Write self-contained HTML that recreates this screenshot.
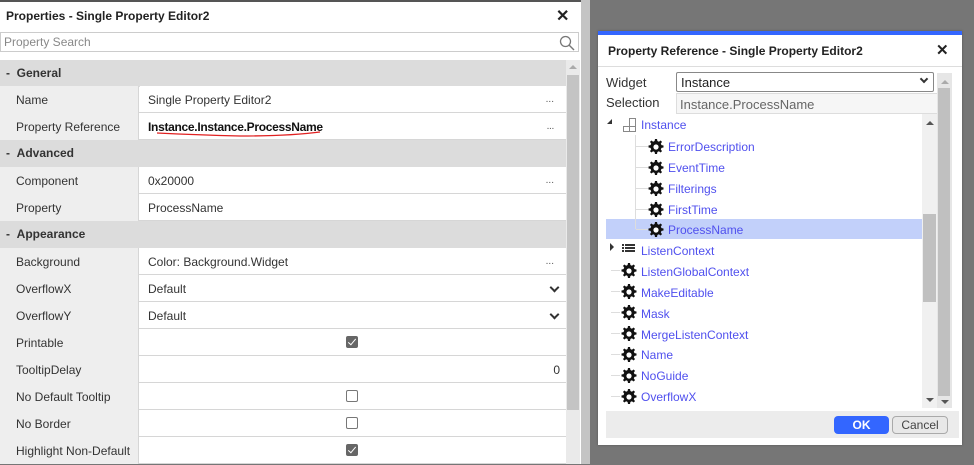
<!DOCTYPE html>
<html><head><style>
*{box-sizing:border-box;margin:0;padding:0}
body{width:974px;height:464px;overflow:hidden;background:#767676;font-family:"Liberation Sans",sans-serif;font-size:12px;color:#333;position:relative}
.a{position:absolute}
.lp{left:0;top:0;width:581px;height:464px;background:#fff;border-top:2px solid #555}
.strip{left:581px;top:0;width:9px;height:464px;background:#c4c4c4}
.row{position:absolute;left:0;width:566px;height:27px;border-bottom:1px solid #d6d6d6}
.lab{position:absolute;left:0;top:0;width:139px;height:27px;background:#eeeeee;padding-left:16px;line-height:28px;border-right:1px solid #d6d6d6}
.val{position:absolute;left:140px;top:0;right:0;height:26px;line-height:28px;padding-left:8px;background:#fff}
.hd{position:absolute;left:0;width:566px;height:27px;background:#dcdcdc;line-height:26px;font-weight:bold;padding-left:6px}
.dots{position:absolute;right:12px;top:0;font-size:10px;color:#555}
.chev{position:absolute;right:8px;top:9px;width:7px;height:7px;border-right:2px solid #333;border-bottom:2px solid #333;transform:rotate(45deg)}
.cb{position:absolute;left:206px;top:7px;width:12px;height:12px;border:1px solid #777;border-radius:2px;background:#fff}
.cb.on{background:#666;border-color:#666}
.cb.on:after{content:"";position:absolute;left:3px;top:0px;width:3px;height:7px;border-right:1.5px solid #fff;border-bottom:1.5px solid #fff;transform:rotate(40deg)}
.tr{position:absolute;font-size:12px;color:#5050ee;height:21px;line-height:23px}
.tl{position:absolute;height:1px;background:#ddd}
</style></head><body>
<div class="a lp"></div>
<div class="a strip"></div>
<div class="a" style="left:6px;top:9px;font-weight:bold;font-size:12px;color:#222">Properties - Single Property Editor2</div>
<div class="a" style="left:556px;top:6px;font-size:16px;font-weight:bold;color:#222">✕</div>
<div class="a" style="left:0;top:32px;width:579px;height:20px;border:1px solid #ccc;background:#fff;color:#888;padding-left:3px;line-height:19px">Property Search</div>
<svg class="a" style="left:559px;top:35px" width="16" height="16"><circle cx="6.5" cy="6.5" r="5" fill="none" stroke="#777" stroke-width="1.3"/><line x1="10" y1="10" x2="15" y2="15" stroke="#777" stroke-width="1.4"/></svg>
<div class="a" style="left:566px;top:60px;width:14px;height:404px;background:#eaeaea"></div>
<div class="a" style="left:567px;top:75px;width:12px;height:335px;background:#c4c4c4"></div>
<div class="a" style="left:569px;top:65px;width:0;height:0;border-left:4px solid transparent;border-right:4px solid transparent;border-bottom:4px solid #aaa"></div>

<div class="hd" style="top:60px">-&nbsp;&nbsp;General</div>
<div class="row" style="top:86px"><div class="lab">Name</div><div class="val">Single Property Editor2<span class="dots">...</span></div></div>
<div class="row" style="top:113px"><div class="lab">Property Reference</div><div class="val" style="font-weight:bold;color:#111;letter-spacing:-0.3px">Instance.Instance.ProcessName<span class="dots" style="font-weight:normal">...</span></div></div>
<svg class="a" style="left:140px;top:128px" width="190" height="12"><path d="M17 5 Q60 7 100 8 Q150 8 180 4" fill="none" stroke="#e02020" stroke-width="1.3"/></svg>
<div class="hd" style="top:140px">-&nbsp;&nbsp;Advanced</div>
<div class="row" style="top:167px"><div class="lab">Component</div><div class="val">0x20000<span class="dots">...</span></div></div>
<div class="row" style="top:194px"><div class="lab">Property</div><div class="val">ProcessName</div></div>
<div class="hd" style="top:221px">-&nbsp;&nbsp;Appearance</div>
<div class="row" style="top:248px"><div class="lab">Background</div><div class="val">Color: Background.Widget<span class="dots">...</span></div></div>
<div class="row" style="top:275px"><div class="lab">OverflowX</div><div class="val">Default<span class="chev"></span></div></div>
<div class="row" style="top:302px"><div class="lab">OverflowY</div><div class="val">Default<span class="chev"></span></div></div>
<div class="row" style="top:329px"><div class="lab">Printable</div><div class="val"><span class="cb on"></span></div></div>
<div class="row" style="top:356px"><div class="lab">TooltipDelay</div><div class="val"><span style="position:absolute;right:6px">0</span></div></div>
<div class="row" style="top:383px"><div class="lab">No Default Tooltip</div><div class="val"><span class="cb"></span></div></div>
<div class="row" style="top:410px"><div class="lab">No Border</div><div class="val"><span class="cb"></span></div></div>
<div class="row" style="top:437px"><div class="lab">Highlight Non-Default</div><div class="val"><span class="cb on"></span></div></div>

<!-- dialog -->
<div class="a" style="left:598px;top:31px;width:364px;height:414px;background:#fff;border-top:4px solid #3366ff;box-shadow:0 0 2px #555"></div>
<div class="a" style="left:608px;top:44px;font-weight:bold;font-size:12px;color:#222">Property Reference - Single Property Editor2</div>
<div class="a" style="left:936px;top:41px;font-size:15px;font-weight:bold;color:#222">✕</div>
<div class="a" style="left:598px;top:66px;width:364px;height:1px;background:#ddd"></div>
<div class="a" style="left:606px;top:75px;font-size:13px;color:#333">Widget</div>
<div class="a" style="left:606px;top:95px;font-size:13px;color:#333">Selection</div>
<div class="a" style="left:676px;top:72px;width:258px;height:20px;border:1px solid #888;border-radius:2px;font-size:13px;line-height:19px;padding-left:4px;color:#222">Instance<span class="chev" style="top:3px;right:6px;width:6px;height:6px"></span></div>
<div class="a" style="left:676px;top:93px;width:262px;height:21px;border:1px solid #ddd;background:#f6f6f6;font-size:13px;line-height:21px;padding-left:3px;color:#666">Instance.ProcessName</div>
<div class="a" style="left:937px;top:73px;width:15px;height:335px;background:#e6e6e6"></div>
<div class="a" style="left:938px;top:88px;width:12px;height:308px;background:#c0c0c0"></div>
<div class="a" style="left:922px;top:114px;width:15px;height:294px;background:#f0f0f0"></div>
<div class="a" style="left:923px;top:214px;width:13px;height:88px;background:#c0c0c0"></div>
<div class="a" style="left:926px;top:121px;border-left:4px solid transparent;border-right:4px solid transparent;border-bottom:4px solid #555"></div>
<div class="a" style="left:926px;top:398px;border-left:4px solid transparent;border-right:4px solid transparent;border-top:4px solid #555"></div>
<div class="a" style="left:941px;top:400px;border-left:4px solid transparent;border-right:4px solid transparent;border-top:4px solid #555"></div>
<div class="a" style="left:941px;top:80px;border-left:4px solid transparent;border-right:4px solid transparent;border-bottom:4px solid #aaa"></div>
<div class="a" style="left:606px;top:219px;width:316px;height:20px;background:#c2d0fa"></div>

<svg class="a" style="left:600px;top:115px" width="322" height="293">
<defs><g id="gear"><path d="M7.5 0.5h2l.4 2 1.5.7 1.7-1.2 1.4 1.4-1.2 1.7.7 1.5 2 .4v2l-2 .4-.7 1.5 1.2 1.7-1.4 1.4-1.7-1.2-1.5.7-.4 2h-2l-.4-2-1.5-.7-1.7 1.2-1.4-1.4 1.2-1.7-.7-1.5-2-.4v-2l2-.4.7-1.5-1.2-1.7 1.4-1.4 1.7 1.2 1.5-.7z" transform="translate(-0.5,-0.5)" fill="#111"/><circle cx="8" cy="8" r="2.6" fill="#fff"/></g></defs>
<path d="M7 9 L12 4 L12 9 Z" fill="#333"/>
<g fill="none" stroke="#888"><rect x="23.5" y="11.5" width="6" height="5"/><rect x="29.5" y="11.5" width="6" height="5"/><rect x="29.5" y="3.5" width="6" height="8"/></g>
<line x1="35.5" y1="20" x2="35.5" y2="114" stroke="#ddd"/>
<g stroke="#ddd"><line x1="36" y1="31.5" x2="48" y2="31.5"/><line x1="36" y1="52.5" x2="48" y2="52.5"/><line x1="36" y1="73.5" x2="48" y2="73.5"/><line x1="36" y1="94.5" x2="48" y2="94.5"/><line x1="36" y1="114.5" x2="48" y2="114.5"/>
<line x1="11" y1="155.5" x2="20" y2="155.5"/><line x1="11" y1="176.5" x2="20" y2="176.5"/><line x1="11" y1="197.5" x2="20" y2="197.5"/><line x1="11" y1="218.5" x2="20" y2="218.5"/><line x1="11" y1="239.5" x2="20" y2="239.5"/><line x1="11" y1="260.5" x2="20" y2="260.5"/><line x1="11" y1="281.5" x2="20" y2="281.5"/></g>
<use href="#gear" x="48" y="24"/><use href="#gear" x="48" y="45"/><use href="#gear" x="48" y="66"/><use href="#gear" x="48" y="87"/><use href="#gear" x="48" y="107"/>
<path d="M10 128 L14 132 L10 136 Z" fill="#333"/>
<g fill="#333"><rect x="22" y="129" width="2" height="2"/><rect x="25" y="129" width="10" height="2"/><rect x="22" y="132" width="2" height="2"/><rect x="25" y="132" width="10" height="2"/><rect x="22" y="135" width="2" height="2"/><rect x="25" y="135" width="10" height="2"/></g>
<use href="#gear" x="21" y="148"/><use href="#gear" x="21" y="169"/><use href="#gear" x="21" y="190"/><use href="#gear" x="21" y="211"/><use href="#gear" x="21" y="232"/><use href="#gear" x="21" y="253"/><use href="#gear" x="21" y="274"/>
</svg>
<div class="tr" style="left:641px;top:114px">Instance</div>
<div class="tr" style="left:668px;top:136px">ErrorDescription</div>
<div class="tr" style="left:668px;top:157px">EventTime</div>
<div class="tr" style="left:668px;top:178px">Filterings</div>
<div class="tr" style="left:668px;top:199px">FirstTime</div>
<div class="tr" style="left:668px;top:219px">ProcessName</div>
<div class="tr" style="left:641px;top:240px">ListenContext</div>
<div class="tr" style="left:641px;top:261px">ListenGlobalContext</div>
<div class="tr" style="left:641px;top:282px">MakeEditable</div>
<div class="tr" style="left:641px;top:303px">Mask</div>
<div class="tr" style="left:641px;top:324px">MergeListenContext</div>
<div class="tr" style="left:641px;top:344px">Name</div>
<div class="tr" style="left:641px;top:365px">NoGuide</div>
<div class="tr" style="left:641px;top:386px">OverflowX</div>

<div class="a" style="left:606px;top:411px;width:353px;height:27px;background:#ececec"></div>
<div class="a" style="left:834px;top:416px;width:55px;height:18px;background:#3366ff;border-radius:4px;color:#fff;text-align:center;line-height:18px;font-size:12px;font-weight:bold">OK</div>
<div class="a" style="left:892px;top:416px;width:56px;height:18px;background:#e8e8e8;border:1px solid #aaa;border-radius:4px;color:#444;text-align:center;line-height:16px;font-size:12px">Cancel</div>
</body></html>
